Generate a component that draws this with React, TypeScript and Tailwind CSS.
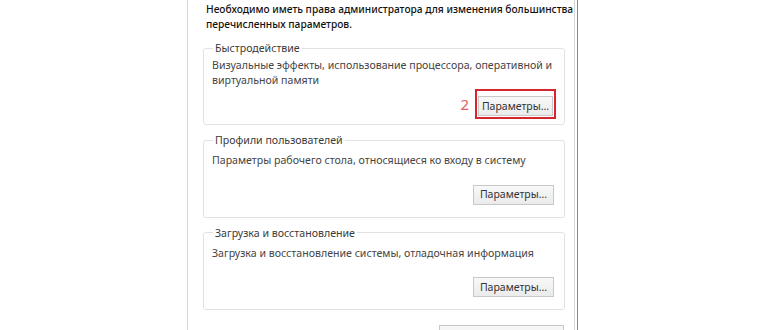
const font = { fontFamily: '"Noto Sans", "DejaVu Sans", sans-serif' }

const ParamsButton = ({ width = "w-[81px]" }: { width?: string }) => (
    <button className={`${width} h-[20px] border border-[#c8c8c8] bg-gradient-to-b from-[#f8f8f8] to-[#ebebeb] text-[10.5px] leading-none text-[#333]`}>
        Параметры...
    </button>
)

type GroupProps = {
    title: string
    lines: string[]
    highlighted?: boolean
}

const GroupBox = ({ title, lines, highlighted }: GroupProps) => (
    <fieldset className={`ml-[15px] mr-[9px] min-w-0 rounded-[3px] border border-[#e2e2e2] pl-[8px] pr-[10px] ${highlighted ? "pb-[5px]" : "pb-[12px]"}`}>
        <legend className="ml-[1px] px-[2px] text-[10.6px] leading-[14px] text-[#3a3a3a]">{title}</legend>
        <div className={`${highlighted ? "mt-[3px]" : "mt-[6px]"} whitespace-nowrap text-[10.6px] leading-[15px] text-[#444]`}>
            {lines.map((l) => (
                <p key={l}>{l}</p>
            ))}
        </div>
        <div className="flex items-center justify-end">
            {highlighted ? (
                <div className="mt-[1px] mr-[-2px] flex items-center gap-[6px]">
                    <span className="text-[15px] leading-none text-[#e0605c]">2</span>
                    <div className="border-[2px] border-[#d6262c] p-[1px]">
                        <ParamsButton width="w-[75px]" />
                    </div>
                </div>
            ) : (
                <div className="mt-[12px]">
                    <ParamsButton />
                </div>
            )}
        </div>
    </fieldset>
)

const App = () => {
    return (
        <div className="h-[330px] w-[770px] overflow-hidden bg-white" style={font}>
            <div className="ml-[187px] flex h-full w-[392px]">
                <div className="h-full w-[388px] border-l border-r border-[#d6d6d6]">
                    <div className="whitespace-nowrap pl-[18px] pt-[2px] text-[10.2px] font-medium leading-[15px] text-[#111]">
                        <p>Необходимо иметь права администратора для изменения большинства</p>
                        <p>перечисленных параметров.</p>
                    </div>

                    <div className="mt-[9px] flex flex-col gap-[8px]">
                        <GroupBox
                            title="Быстродействие"
                            lines={["Визуальные эффекты, использование процессора, оперативной и", "виртуальной памяти"]}
                            highlighted
                        />
                        <GroupBox
                            title="Профили пользователей"
                            lines={["Параметры рабочего стола, относящиеся ко входу в систему"]}
                        />
                        <GroupBox
                            title="Загрузка и восстановление"
                            lines={["Загрузка и восстановление системы, отладочная информация"]}
                        />
                    </div>

                    <div className="mt-[15px] flex justify-end pr-[10px]">
                        <div className="h-[20px] w-[125px] border border-[#c8c8c8] bg-[#f6f6f6]"></div>
                    </div>
                </div>
                <div className="h-full w-[2px] bg-white"></div>
                <div className="h-full w-[1px] bg-[#8c8c8c]"></div>
            </div>
        </div>
    )
}

export default App
